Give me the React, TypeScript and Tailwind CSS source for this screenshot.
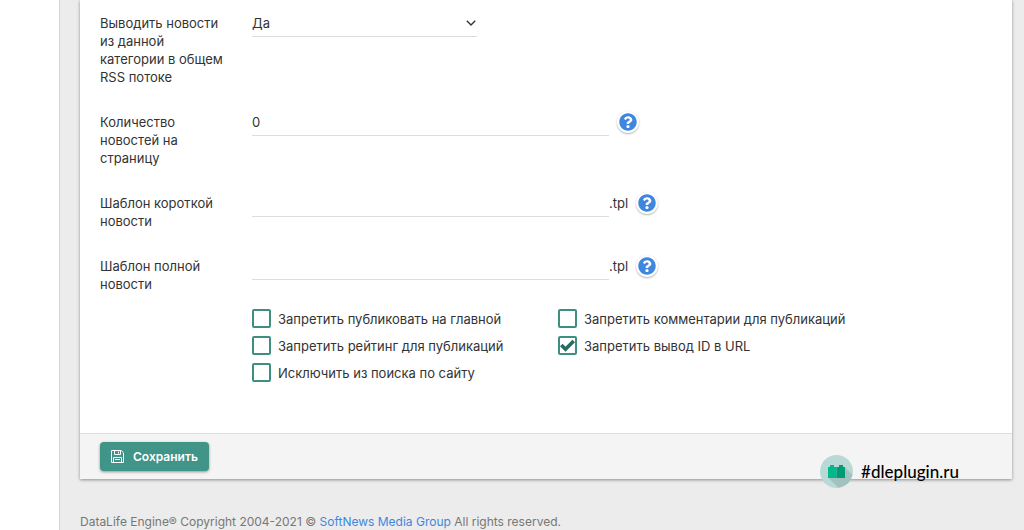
import { ReactNode, useState } from 'react'
import { FaQuestionCircle } from 'react-icons/fa'

const options = [
    { id: 'not-main', label: 'Запретить публиковать на главной', checked: false },
    { id: 'no-comments', label: 'Запретить комментарии для публикаций', checked: false },
    { id: 'no-rating', label: 'Запретить рейтинг для публикаций', checked: false },
    { id: 'no-id', label: 'Запретить вывод ID в URL', checked: true },
    { id: 'no-search', label: 'Исключить из поиска по сайту', checked: false },
]

function Row({ id, label, children }: { id: string; label: string; children: ReactNode }) {
    return (
        <div className="flex items-start gap-5">
            <label htmlFor={id} className="w-[132px] shrink-0">
                {label}
            </label>
            <div className="flex min-w-0 flex-1 items-start">{children}</div>
        </div>
    )
}

function TextField({ id, value = '' }: { id: string; value?: string }) {
    return (
        <input
            id={id}
            type="text"
            defaultValue={value}
            className="w-[357px] border-b border-[#dddddd] bg-transparent pb-1 outline-none"
        />
    )
}

function Help() {
    return (
        <button
            type="button"
            aria-label="Помощь"
            className="-my-0.5 ml-2 rounded-full bg-white p-0.5 text-[#3f87de] shadow-[0_1px_2px_rgba(0,0,0,0.3)]"
        >
            <FaQuestionCircle className="size-[18px]" />
        </button>
    )
}

function Option({ id, label, checked }: { id: string; label: string; checked: boolean }) {
    const [on, setOn] = useState(checked)
    return (
        <div className="flex items-center gap-[7px]">
            <span className="relative flex">
                <input
                    id={id}
                    type="checkbox"
                    checked={on}
                    onChange={() => setOn(!on)}
                    className="size-[19px] appearance-none rounded-xs border-2 border-[#3d9080]"
                />
                {on && (
                    <svg viewBox="0 0 19 19" className="pointer-events-none absolute inset-0 size-[19px]" fill="none">
                        <path d="M3.3 9 7.5 13.2 15.7 5" stroke="#266d60" strokeWidth="3.6" />
                    </svg>
                )}
            </span>
            <label htmlFor={id}>{label}</label>
        </div>
    )
}

function SaveIcon() {
    return (
        <svg viewBox="0 0 13 13" className="size-[13px]" fill="none" stroke="currentColor">
            <path d="M.5.5h9.7l2.3 2.3v9.7H.5z" />
            <path d="M3.5.5v4h6v-4M7.5 1.5v2M2.5 12.5v-5h8v5M4 9.5h5" />
        </svg>
    )
}

function Watermark() {
    return (
        <div className="absolute right-[53px] -bottom-[9px] flex items-center gap-2">
            <svg viewBox="0 0 33 33" className="size-[33px]">
                <circle cx="16.5" cy="16.5" r="16.5" fill="#b9d9d6" />
                <path d="M25 12.5 32.4 19.9A16.5 16.5 0 0 1 18.5 32.8L8 22.5z" fill="#a3c1be" />
                <path d="M8 12h2v-2h4v2h2.5v11H8z" fill="#00b88a" />
                <path d="M16.5 12H19v-2h4v2h2v11h-8.5z" fill="#009b75" />
            </svg>
            <span className="font-[Lato,sans-serif] text-[17px] font-medium text-black">#dleplugin.ru</span>
        </div>
    )
}

export default function App() {
    return (
        <div className="flex min-h-screen bg-[#ececec] font-[Inter,sans-serif] text-[13px] leading-[18px] text-[#333333]">
            <aside className="w-[60px] shrink-0 border-r border-[#d5d5d5] bg-white" />

            <main className="min-w-0 flex-1 pr-3 pl-5">
                <form
                    onSubmit={(e) => e.preventDefault()}
                    className="relative bg-white shadow-[0_1px_3px_rgba(0,0,0,0.4)]"
                >
                    <div className="flex flex-col gap-[27px] px-5 pt-3.5">
                        <Row id="rss" label="Выводить новости из данной категории в общем RSS потоке">
                            <div className="relative">
                                <select
                                    id="rss"
                                    className="w-[225px] appearance-none border-b border-[#dddddd] bg-transparent pb-1 outline-none"
                                >
                                    <option>Да</option>
                                    <option>Нет</option>
                                </select>
                                <svg
                                    viewBox="0 0 10 6"
                                    className="pointer-events-none absolute top-1.5 right-px h-1.5 w-2.5"
                                    fill="none"
                                >
                                    <path d="M.8.8 5 4.9 9.2.8" stroke="#333333" strokeWidth="1.4" />
                                </svg>
                            </div>
                        </Row>
                        <Row id="count" label="Количество новостей на страницу">
                            <TextField id="count" value="0" />
                            <Help />
                        </Row>
                        <Row id="short" label="Шаблон короткой новости">
                            <TextField id="short" />
                            <span>.tpl</span>
                            <Help />
                        </Row>
                        <Row id="full" label="Шаблон полной новости">
                            <TextField id="full" />
                            <span>.tpl</span>
                            <Help />
                        </Row>
                    </div>

                    <div className="ml-[172px] grid grid-cols-[306px_1fr] gap-y-2 pt-4 pb-[51px]">
                        {options.map((o) => (
                            <Option key={o.id} {...o} />
                        ))}
                    </div>

                    <div className="border-t border-[#dddddd] bg-[#f4f4f4] px-5 py-2">
                        <button
                            type="submit"
                            className="flex h-[29px] items-center gap-[9px] rounded-sm bg-[#419488] px-[11px] text-xs font-semibold text-white shadow-[0_1px_3px_rgba(0,0,0,0.4)]"
                        >
                            <SaveIcon />
                            Сохранить
                        </button>
                    </div>

                    <Watermark />
                </form>

                <footer className="pt-[35px] text-xs text-[#777777]">
                    DataLife Engine® Copyright 2004-2021 ©{' '}
                    <a href="#" className="text-[#3f87de]">
                        SoftNews Media Group
                    </a>{' '}
                    All rights reserved.
                </footer>
            </main>
        </div>
    )
}
